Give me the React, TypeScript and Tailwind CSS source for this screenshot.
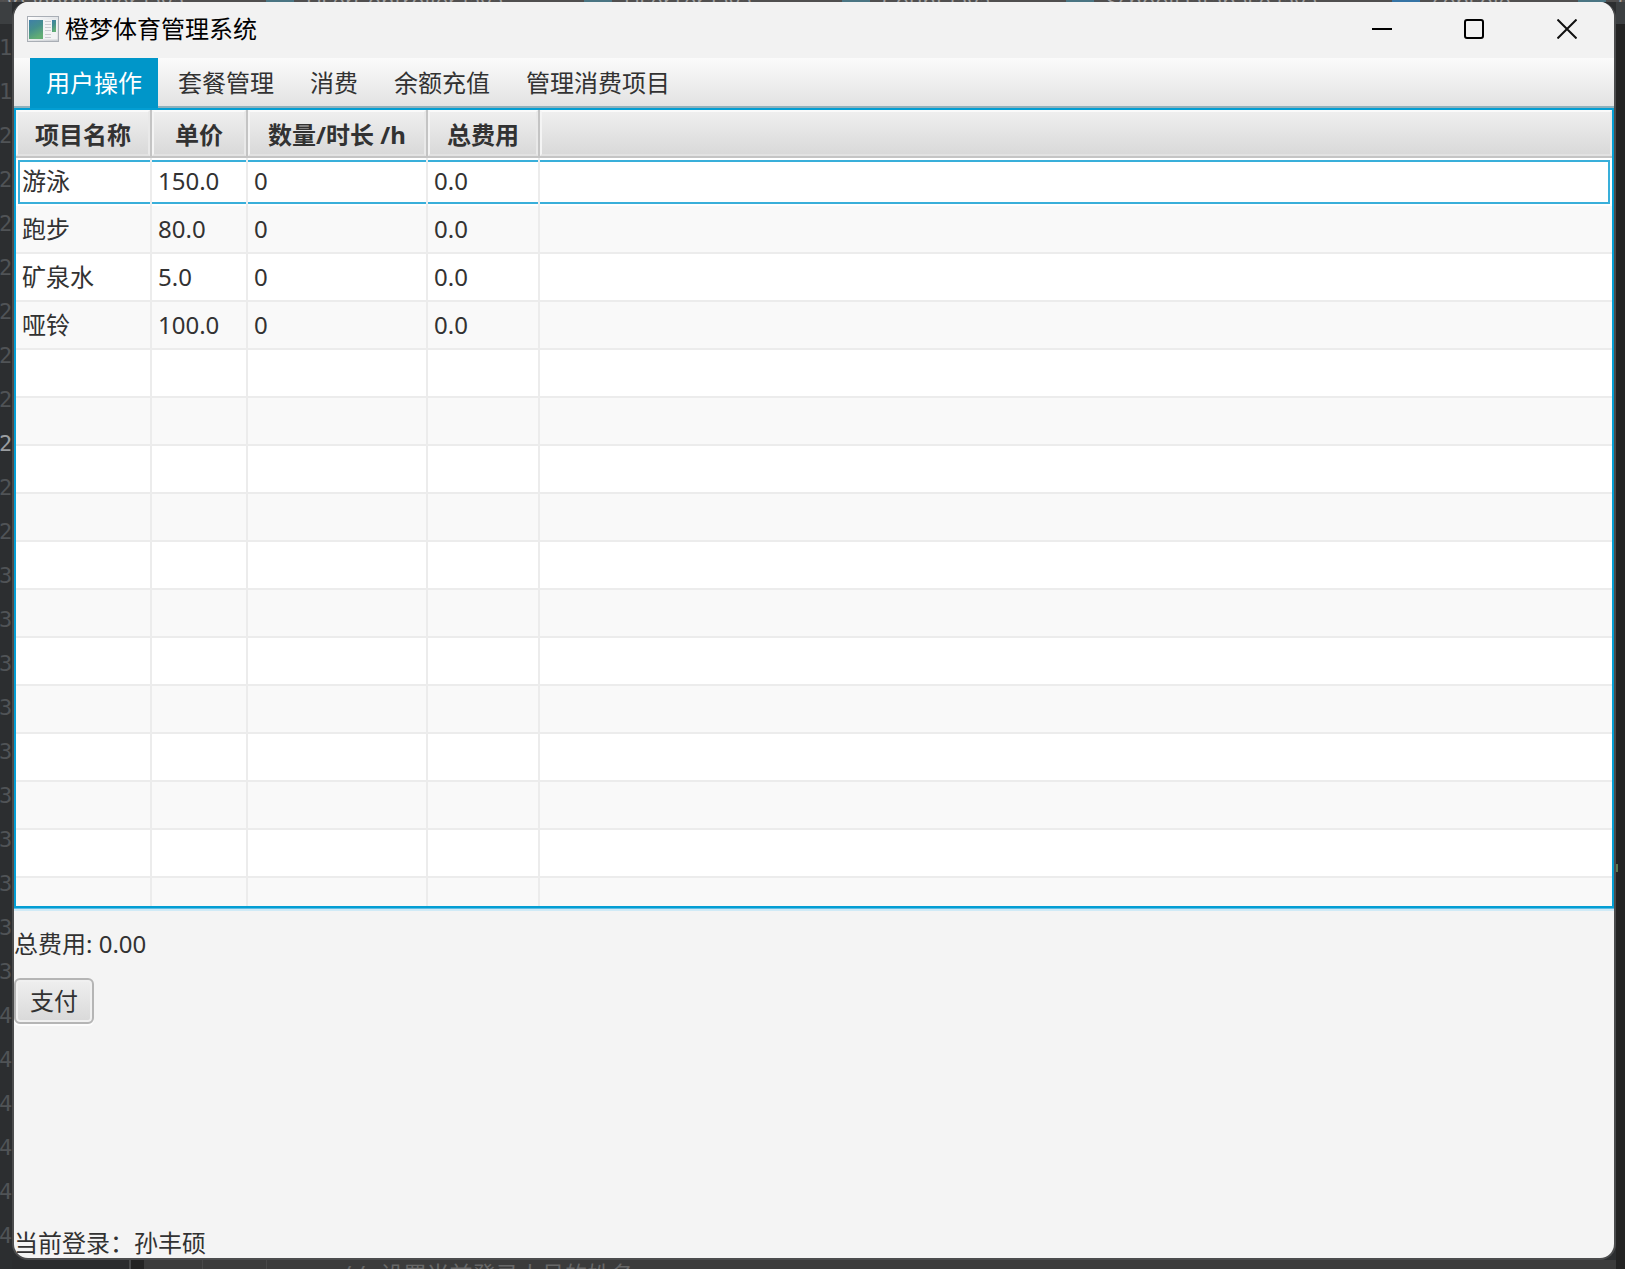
import React, { useState } from "react";

interface Item {
  name: string;
  price: string;
  amount: string;
  total: string;
}

interface EditorTab {
  label: string;
  width: string;
  iconColor: string;
}

const tabs: string[] = ["用户操作", "套餐管理", "消费", "余额充值", "管理消费项目"];

const items: Item[] = [
  { name: "游泳", price: "150.0", amount: "0", total: "0.0" },
  { name: "跑步", price: "80.0", amount: "0", total: "0.0" },
  { name: "矿泉水", price: "5.0", amount: "0", total: "0.0" },
  { name: "哑铃", price: "100.0", amount: "0", total: "0.0" },
];

const editorTabs: EditorTab[] = [
  { label: "anagementer.java", width: "w-[266px]", iconColor: "" },
  { label: "UserController.java", width: "w-[318px]", iconColor: "bg-[#4a7583]" },
  { label: "UserTer.java", width: "w-[258px]", iconColor: "bg-[#4a7583]" },
  { label: "Count.java", width: "w-[224px]", iconColor: "bg-[#4a7583]" },
  { label: "SchoolDatabase.java", width: "w-[326px]", iconColor: "bg-[#4a7583]" },
  { label: "console", width: "w-[186px]", iconColor: "bg-[#3574a5]" },
  { label: "C", width: "w-[80px]", iconColor: "bg-[#4a7583]" },
];

const lineNumbers: number[] = Array.from({ length: 28 }, (_, i) => i + 18);
const emptyRows: number[] = Array.from({ length: 12 }, (_, i) => i);

const AppIcon: React.FC = () => (
  <svg className="h-[26px] w-8" viewBox="0 0 32 26" aria-hidden="true">
    <defs>
      <linearGradient id="pane" x1="0" y1="0" x2="0.4" y2="1">
        <stop offset="0" stopColor="#3f7fa8" />
        <stop offset="0.5" stopColor="#448f8d" />
        <stop offset="1" stopColor="#62ae74" />
      </linearGradient>
      <linearGradient id="frame" x1="0" y1="0" x2="1" y2="1">
        <stop offset="0" stopColor="#ffffff" />
        <stop offset="1" stopColor="#c9cdd2" />
      </linearGradient>
    </defs>
    <rect x="0.5" y="0.5" width="31" height="25" fill="url(#frame)" stroke="#a9aeb5" />
    <rect x="1.5" y="3.5" width="29" height="20" fill="#f2f3f4" />
    <rect x="2" y="4" width="14" height="19" fill="url(#pane)" />
    <path d="M18 5.500h6M18 8.500h6M18 11.500h6M18 14.500h6M18 18.500h6M18 21.500h6" stroke="#c9ccd0" />
    <rect x="25" y="4" width="4" height="12" fill="url(#pane)" />
  </svg>
);

const EditorTabs: React.FC = () => (
  <div className="flex h-[2px] items-center overflow-hidden bg-[#504f4f] font-['Open_Sans','Noto_Sans',sans-serif] text-[22px] leading-6 text-[#a0a0a0]">
    {editorTabs.map((tab) => (
      <div key={tab.label} className={`flex h-[2px] shrink-0 items-center gap-3 ${tab.width}`}>
        {tab.iconColor && <span className={`h-[2px] w-7 ${tab.iconColor}`}></span>}
        <span>{tab.label}</span>
      </div>
    ))}
  </div>
);

const TitleBar: React.FC = () => (
  <header className="flex h-14 shrink-0 items-center justify-between bg-[#f2f2f2] pb-[2px] pl-[13px]">
    <div className="flex items-center gap-[6px]">
      <AppIcon />
      <h1 className="text-2xl text-black">橙梦体育管理系统</h1>
    </div>
    <div className="flex">
      <button type="button" aria-label="最小化" className="flex h-[54px] w-[92px] items-center justify-center">
        <svg className="size-5" viewBox="0 0 20 20" aria-hidden="true">
          <path d="M0 10h20" stroke="#000" strokeWidth="2" />
        </svg>
      </button>
      <button type="button" aria-label="最大化" className="flex h-[54px] w-[92px] items-center justify-center">
        <svg className="size-5" viewBox="0 0 20 20" fill="none" aria-hidden="true">
          <rect x="1" y="1" width="18" height="18" rx="2" stroke="#000" strokeWidth="2" />
        </svg>
      </button>
      <button type="button" aria-label="关闭" className="flex h-[54px] w-[94px] items-center justify-center">
        <svg className="size-5" viewBox="0 0 20 20" fill="none" aria-hidden="true">
          <path d="M0.5 0.5l19 19M19.5 0.5l-19 19" stroke="#111" strokeWidth="2" />
        </svg>
      </button>
    </div>
  </header>
);

const ItemTable: React.FC = () => {
  const head = "border-r-2 border-b-2 border-[#c4c4c4] p-0 font-bold";
  const headInner =
    "flex h-[46px] items-center justify-center border-2 border-t-[#fafafa] border-r-[#e9e9e9] border-b-[#e2e2e2] border-l-[#f4f4f4] bg-linear-to-b from-[#efefef] to-[#d9d9d9] pt-1";
  const cell = "border-r-2 border-[#ececec] p-0";

  return (
    <div className="h-[800px] shrink-0 overflow-hidden border-2 border-[#039ed3] shadow-[0_1px_0_#5bbde6,0_3px_0_#d0eaf6]">
      <table className="w-full table-fixed border-separate border-spacing-0">
        <colgroup>
          <col className="w-[136px]" />
          <col className="w-24" />
          <col className="w-[180px]" />
          <col className="w-28" />
          <col />
        </colgroup>
        <thead>
          <tr>
            <th className={head}>
              <div className={headInner}>项目名称</div>
            </th>
            <th className={head}>
              <div className={headInner}>单价</div>
            </th>
            <th className={head}>
              <div className={headInner}>数量/时长 /h</div>
            </th>
            <th className={head}>
              <div className={headInner}>总费用</div>
            </th>
            <td className="border-b-2 border-[#c4c4c4] p-0">
              <div className={headInner}></div>
            </td>
          </tr>
        </thead>
        <tbody>
          {items.map((item, i) => {
            const focused = i === 0;
            const td = `${cell} ${focused ? "py-[2px]" : "border-b-2"}`;
            const inner = focused
              ? "flex h-11 items-center border-y-2 border-[#39afda] pb-[2px]"
              : "flex h-[46px] items-center";
            return (
              <tr key={item.name} className="odd:bg-white even:bg-[#f9f9f9]">
                <td className={`${td} ${focused ? "pl-[2px]" : ""}`}>
                  <div className={`${inner} ${focused ? "border-l-2 pl-[2px]" : "pl-[6px]"}`}>{item.name}</div>
                </td>
                <td className={td}>
                  <div className={`${inner} pl-[6px]`}>{item.price}</div>
                </td>
                <td className={td}>
                  <div className={`${inner} pl-[6px]`}>{item.amount}</div>
                </td>
                <td className={td}>
                  <div className={`${inner} pl-[6px]`}>{item.total}</div>
                </td>
                <td className={`border-[#ececec] p-0 ${focused ? "py-[2px] pr-[2px]" : "border-b-2"}`}>
                  <div className={`${inner} ${focused ? "border-r-2" : ""}`}></div>
                </td>
              </tr>
            );
          })}
          {emptyRows.map((row) => (
            <tr key={row} className="h-12 odd:bg-white even:bg-[#f9f9f9]">
              <td className={`${cell} border-b-2`}></td>
              <td className={`${cell} border-b-2`}></td>
              <td className={`${cell} border-b-2`}></td>
              <td className={`${cell} border-b-2`}></td>
              <td className="border-b-2 border-[#ececec] p-0"></td>
            </tr>
          ))}
        </tbody>
      </table>
    </div>
  );
};

const App: React.FC = () => {
  const [active, setActive] = useState<string>("用户操作");

  return (
    <div className="flex h-screen flex-col overflow-hidden bg-[#2b2b2b]">
      <EditorTabs />
      <div className="flex min-h-0 flex-1">
        {/* editor gutter behind the window */}
        <div className="w-3 overflow-hidden border-t-[22px] border-[#3c3f41] bg-[#2c2e30] pt-[2px] font-['DejaVu_Sans_Mono',monospace] text-[22px] leading-[44px] text-[#505356]">
          {lineNumbers.map((n) => (
            <div key={n} className={`-ml-px ${n === 27 ? "text-[#9a9da0]" : ""}`}>
              {n}
            </div>
          ))}
        </div>

        <div className="flex min-w-0 flex-1 flex-col bg-[#2c2e30]">
          <main className="flex min-h-0 flex-1 flex-col overflow-hidden rounded-2xl border-x-2 border-b-2 border-[#4b4c4d] bg-[#f4f4f4] font-['Noto_Sans','Noto_Sans_CJK_SC',sans-serif] text-2xl text-[#323232]">
            <TitleBar />
            <nav
              className="flex h-[50px] shrink-0 border-b-2 border-[#8fb0bb] bg-linear-to-b from-[#fbfbfb] to-[#e3e3e3] pl-4"
              role="tablist"
            >
              {tabs.map((tab) => (
                <button
                  key={tab}
                  type="button"
                  role="tab"
                  aria-selected={active === tab}
                  onClick={() => setActive(tab)}
                  className={`mr-1 h-[50px] px-4 ${active === tab ? "bg-[#0096c9] text-white" : ""}`}
                >
                  {tab}
                </button>
              ))}
            </nav>
            <ItemTable />
            <p className="mt-5 leading-8">总费用: 0.00</p>
            <div className="mt-[18px]">
              <button
                type="button"
                className="h-[46px] rounded-md border-2 border-[#b5b5b5] bg-linear-to-b from-[#efefef] to-[#d9d9d9] px-[14px] leading-9 shadow-[inset_0_0_0_2px_#f0f0f0,0_2px_0_#fcfcfc]"
              >
                支付
              </button>
            </div>
            <footer className="mt-auto leading-[30px]">当前登录：孙丰硕</footer>
          </main>
          {/* code line showing under the window */}
          <div className="flex h-[9px] shrink-0 overflow-hidden">
            <div className="w-[119px] border-r-2 border-[#4a4b4c] bg-[#2b2c2e]"></div>
            <div className="w-[13px] bg-[#232323]"></div>
            <div className="w-[59px] border-r border-[#484848] bg-[#3b3b3b]"></div>
            <div className="w-16 border-r border-[#484848] bg-[#3b3b3b]"></div>
            <div className="flex-1 bg-[#3b3b3b] pl-[72px] font-['DejaVu_Sans_Mono','Noto_Sans_CJK_SC',monospace] text-[23px] leading-[30px] whitespace-pre text-[#686868]">
              // 设置当前登录人员的姓名
            </div>
          </div>
        </div>
        <div className="flex w-[9px] flex-col justify-center overflow-hidden border-t-[22px] border-[#3c3f41] bg-[#232323]">
          <div className="h-[442px]"></div>
          <div className="h-2 w-px border-r-2 border-[#5c7a52]"></div>
        </div>
      </div>
    </div>
  );
};

export default App;
